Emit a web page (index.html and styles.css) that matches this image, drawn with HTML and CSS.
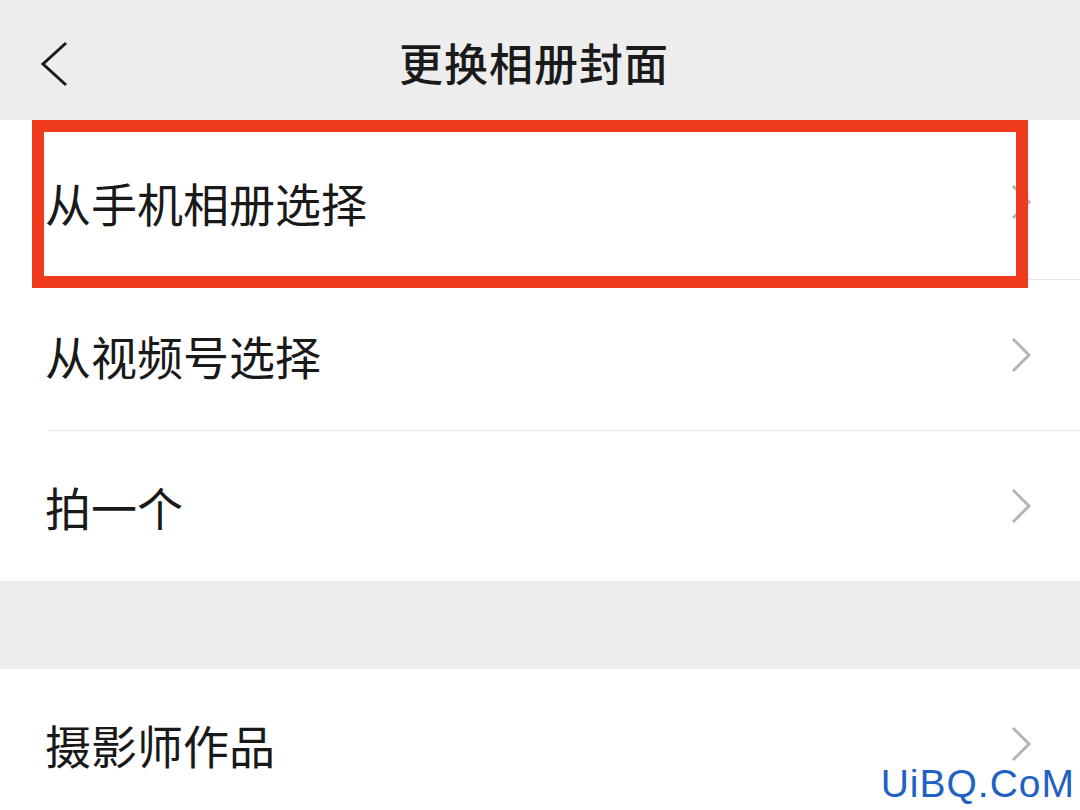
FILE: index.html
```html
<!DOCTYPE html>
<html lang="zh-CN">
<head>
  <meta charset="UTF-8">
  <title>更换相册封面</title>
  <link rel="stylesheet" href="styles.css">
</head>
<body>
  <header class="topbar">
    <a class="back" href="#">
      <svg width="30" height="48" viewBox="0 0 30 48"><polyline points="26,3 3,24 26,45" fill="none" stroke="#1a1a1a" stroke-width="3"/></svg>
    </a>
    <h1 class="title">更换相册封面</h1>
  </header>

  <ul class="menu">
    <li class="item first">
      <span>从手机相册选择</span>
      <svg class="chev" width="22" height="36" viewBox="0 0 22 36"><polyline points="3,2 19,18 3,34" fill="none" stroke="#b4b4b4" stroke-width="3"/></svg>
    </li>
    <li class="item">
      <span>从视频号选择</span>
      <svg class="chev" width="22" height="36" viewBox="0 0 22 36"><polyline points="3,2 19,18 3,34" fill="none" stroke="#b4b4b4" stroke-width="3"/></svg>
    </li>
    <li class="item">
      <span>拍一个</span>
      <svg class="chev" width="22" height="36" viewBox="0 0 22 36"><polyline points="3,2 19,18 3,34" fill="none" stroke="#b4b4b4" stroke-width="3"/></svg>
    </li>
  </ul>

  <div class="gap"></div>

  <ul class="menu">
    <li class="item">
      <span>摄影师作品</span>
      <svg class="chev" width="22" height="36" viewBox="0 0 22 36"><polyline points="3,2 19,18 3,34" fill="none" stroke="#b4b4b4" stroke-width="3"/></svg>
    </li>
  </ul>

  <!-- red highlight drawn over the first row -->
  <div class="highlight"></div>
  <div class="mark">UiBQ.CoM</div>
</body>
</html>
```

FILE: styles.css
```css
body {
  margin: 0;
  background: #ffffff;
  font-family: "Noto Sans CJK SC", "Noto Sans", sans-serif;
  color: #191919;
  overflow: hidden;
  height: 810px;
  position: relative;
}

.topbar {
  height: 120px;
  background: #ededed;
  display: flex;
  align-items: center;
  justify-content: center;
  position: relative;
}

.back {
  position: absolute;
  left: 40px;
  top: 40px;
  display: block;
  line-height: 0;
}

.title {
  margin: 0 0 0 -12px;
  font-size: 44px;
  font-weight: 500;
  color: #1a1a1a;
  letter-spacing: 1px;
  padding-top: 4px;
}

.menu {
  list-style: none;
  margin: 0;
  padding: 0;
  background: #ffffff;
}

.item {
  height: 150px;
  display: flex;
  align-items: center;
  justify-content: space-between;
  padding: 0 48px 0 45px;
  font-size: 46px;
  position: relative;
}

.item.first {
  height: 155px;
  padding-top: 4px;
}

.item + .item::before {
  content: "";
  position: absolute;
  left: 48px;
  right: 0;
  top: -1px;
  height: 1px;
  background: #e6e6e6;
}

.item + .item {
  margin-top: 1px;
}

.chev {
  display: block;
}

.gap {
  height: 88px;
  background: #ededed;
}

.highlight {
  position: absolute;
  left: 32px;
  top: 120px;
  width: 996px;
  height: 168px;
  box-sizing: border-box;
  border: 12px solid #ef3a1d;
}

.mark {
  position: absolute;
  right: 5px;
  bottom: 4px;
  font-family: "Liberation Sans", sans-serif;
  font-size: 39px;
  letter-spacing: 1px;
  color: #1f62c4;
}
```
